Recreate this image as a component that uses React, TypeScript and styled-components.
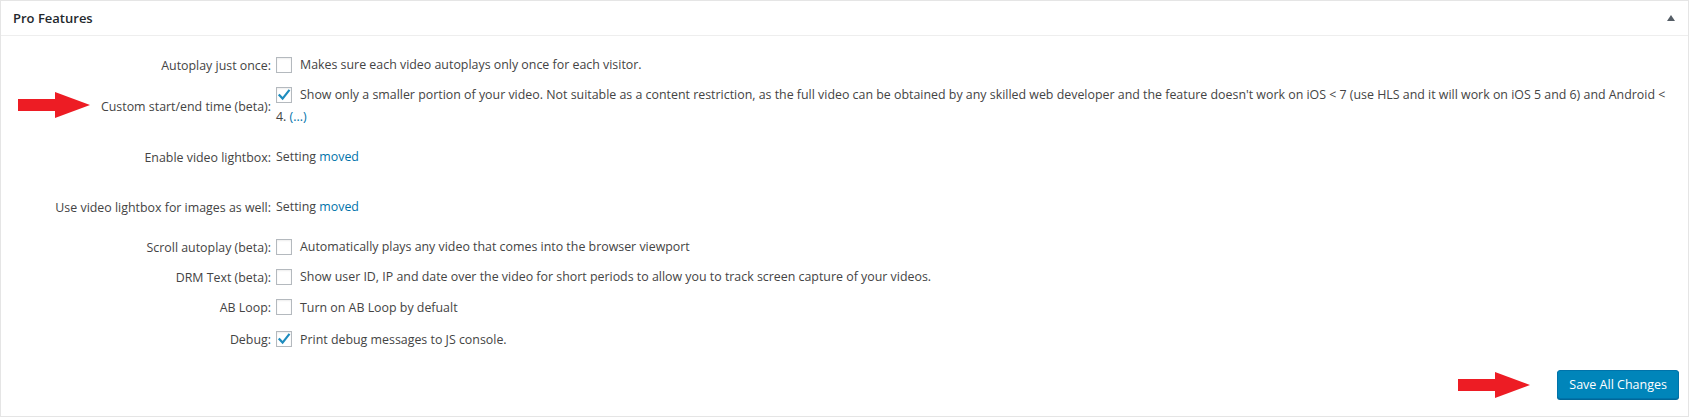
import React from "react";
import styled, { createGlobalStyle } from "styled-components";

interface RowProps {
  height: number;
}

interface OptionProps {
  label: string;
  height: number;
  checked?: boolean;
  children: React.ReactNode;
}

const GlobalStyle = createGlobalStyle`
  * {
    box-sizing: border-box;
  }
  body {
    margin: 0;
    background: #fff;
    font-family: "Open Sans", "Noto Sans", sans-serif;
    font-size: 12.4px;
    color: #444;
  }
`;

const Arrow: React.FC<{ className?: string }> = ({ className }) => (
  <svg className={className} width="72" height="26" viewBox="0 0 72 26">
    <rect x="0" y="7" width="38" height="12" fill="#ed1c24" />
    <polygon points="37,0 72,13 37,26" fill="#ed1c24" />
  </svg>
);

const Check = () => (
  <svg width="14" height="14" viewBox="0 0 14 14">
    <path
      d="M2.5 7.2 L5.6 10.6 L11.8 2.8"
      fill="none"
      stroke="#1e8cbe"
      strokeWidth="2.2"
      strokeLinecap="square"
    />
  </svg>
);

const Option: React.FC<OptionProps> = ({ label, height, checked, children }) => (
  <Row height={height}>
    <Label>{label}</Label>
    <Cell>
      <Box>{checked && <Check />}</Box>
      {children}
    </Cell>
  </Row>
);

const App: React.FC = () => {
  return (
    <>
      <GlobalStyle />
      <Postbox>
        <Header>
          <h2>Pro Features</h2>
          <svg width="8" height="6" viewBox="0 0 8 6">
            <polygon points="4,0 8,6 0,6" fill="#555d66" />
          </svg>
        </Header>

        <Body>
          <Option label="Autoplay just once:" height={30}>
            Makes sure each video autoplays only once for each visitor.
          </Option>

          <Row height={52}>
            <PointerArrow />
            <Label>Custom start/end time (beta):</Label>
            <Cell lines>
              <Box>
                <Check />
              </Box>
              Show only a smaller portion of your video. Not suitable as a
              content restriction, as the full video can be obtained by any
              skilled web developer and the feature doesn't work on iOS &lt; 7
              (use HLS and it will work on iOS 5 and 6) and Android &lt;
              <br />
              4. <a href="#">(...)</a>
            </Cell>
          </Row>

          <Row height={50}>
            <Label>Enable video lightbox:</Label>
            <Cell>
              Setting <a href="#">moved</a>
            </Cell>
          </Row>

          <Row height={50}>
            <Label>Use video lightbox for images as well:</Label>
            <Cell>
              Setting <a href="#">moved</a>
            </Cell>
          </Row>

          <Option label="Scroll autoplay (beta):" height={30}>
            Automatically plays any video that comes into the browser viewport
          </Option>
          <Option label="DRM Text (beta):" height={30}>
            Show user ID, IP and date over the video for short periods to allow
            you to track screen capture of your videos.
          </Option>
          <Option label="AB Loop:" height={31}>
            Turn on AB Loop by defualt
          </Option>
          <Option label="Debug:" height={33} checked>
            Print debug messages to JS console.
          </Option>
        </Body>

        <Footer>
          <Arrow />
          <SaveButton>Save All Changes</SaveButton>
        </Footer>
      </Postbox>
    </>
  );
};

const Postbox = styled.div`
  width: 1689px;
  border: 1px solid #e5e5e5;
  background: #fff;
`;

const Header = styled.div`
  height: 35px;
  border-bottom: 1px solid #eee;
  display: flex;
  align-items: center;
  justify-content: space-between;
  padding: 0 13px 1px 12px;

  h2 {
    margin: 0;
    font-size: 13px;
    font-weight: 600;
    color: #23282d;
  }
`;

const Body = styled.div`
  padding-top: 14px;
`;

const Row = styled.div<RowProps>`
  position: relative;
  height: ${(props) => props.height}px;
  display: grid;
  grid-template-columns: 270px 1fr;
  column-gap: 5px;
  align-items: center;
  padding-right: 8px;
`;

const PointerArrow = styled(Arrow)`
  position: absolute;
  left: 17px;
  top: 12px;
`;

const Label = styled.div`
  text-align: right;
  color: #444;
  white-space: nowrap;
`;

const Cell = styled.div<{ lines?: boolean }>`
  line-height: ${(props) => (props.lines ? "22px" : "18px")};
  color: #444;

  a {
    color: #0073aa;
    text-decoration: none;
  }
`;

const Box = styled.span`
  display: inline-flex;
  align-items: center;
  justify-content: center;
  width: 16px;
  height: 16px;
  margin-right: 8px;
  vertical-align: middle;
  position: relative;
  top: -1px;
  border: 1px solid #b4b9be;
  background: #fff;
  box-shadow: inset 0 1px 2px rgba(0, 0, 0, 0.07);
`;

const Footer = styled.div`
  display: flex;
  justify-content: flex-end;
  align-items: center;
  gap: 27px;
  padding: 14px 9px 17px 0;
`;

const SaveButton = styled.button`
  height: 29px;
  padding: 0 11px;
  font-family: "Open Sans", "Noto Sans", sans-serif;
  font-size: 12.5px;
  color: #fff;
  background: #0085ba;
  border: 1px solid #0073aa;
  border-radius: 3px;
  box-shadow: 0 1px 0 #006799;
  cursor: pointer;
`;

export default App;
